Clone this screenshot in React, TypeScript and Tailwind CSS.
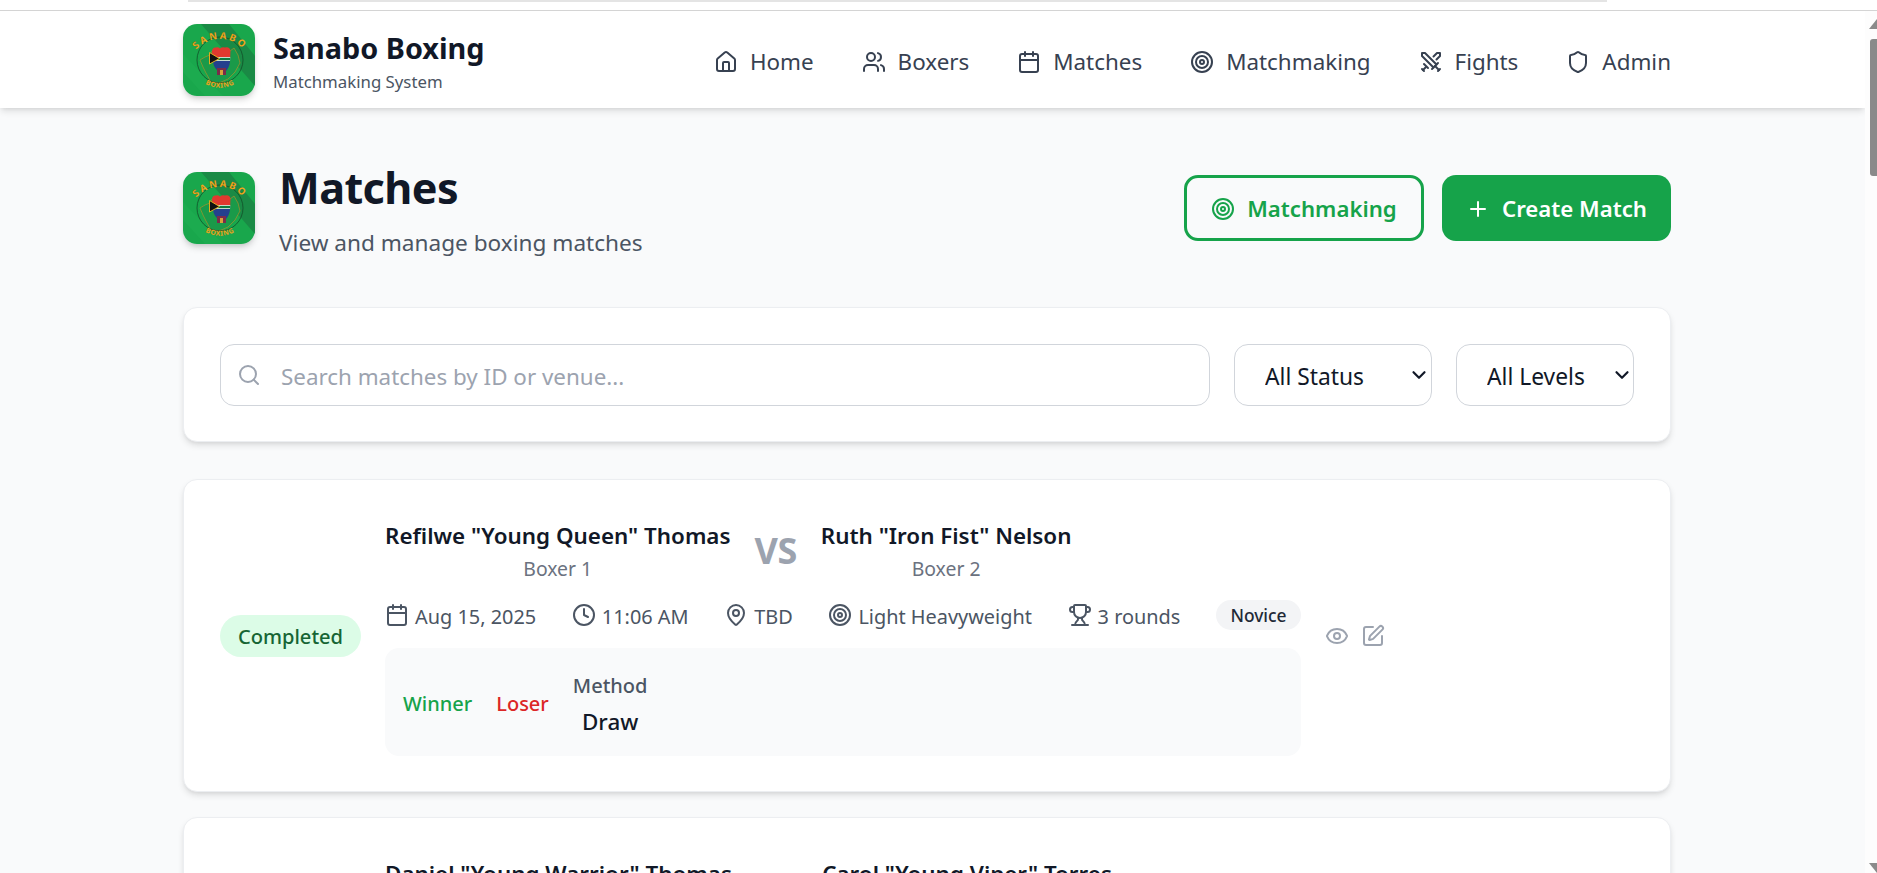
import React from "react";
import { House, Users, Calendar, Target, Swords, Shield, Plus, Search, Clock, MapPin, Trophy, Eye, SquarePen, ChevronDown } from "lucide-react";

function Logo({ id }: { id: string }) {
  return (
    <div className="w-[72px] h-[72px] shrink-0 rounded-[14px] overflow-hidden shadow-[0_4px_7px_-1px_rgba(0,0,0,0.18),0_2px_4px_-2px_rgba(0,0,0,0.1)]">
      <svg viewBox="0 0 72 72" width="72" height="72" className="block">
        <rect width="72" height="72" fill="#19a74c" />
        <polygon points="18,0 46,0 72,32 72,62" fill="#1a8a45" />
        <polygon points="0,48 0,30 40,72 22,72" fill="#1cab4f" />
        <path id={id + "top"} d="M9 31.5 A32 32 0 0 1 65 31.5" fill="none" />
        <path id={id + "bot"} d="M17 56 A30 30 0 0 0 57 56" fill="none" />
        <path d="M17 36 L22 33 L27 31 L29 27 L47 27 L51 24 L55 31 L57 39 L52 48 L45 55 L36 59 L28 58 L23 49 L20 43 Z" fill="#1a9a49" stroke="#a9902a" strokeWidth="0.7" />
        <circle cx="37" cy="36" r="23" fill="none" stroke="#134e2a" strokeWidth="0.8" />
        <clipPath id={id + "fist"}>
          <path d="M29 28 Q29 23 33 23.5 Q35 22.5 37 24.5 Q39 22.5 42 23.5 Q47 22.5 47.5 27 L47 38 Q46 44 43 47 L35 47 Q31 44 30 38 Z" />
        </clipPath>
        <g clipPath={`url(#${id}fist)`}>
          <rect x="26" y="21" width="24" height="13" fill="#e0392f" />
          <rect x="26" y="34" width="24" height="15" fill="#24408e" />
          <path d="M33 35 H50" stroke="#fff" strokeWidth="4" />
          <path d="M33 35 H50" stroke="#0f7a3e" strokeWidth="2.6" />
        </g>
        <polygon points="26.5,28.5 36.5,34.5 26.5,40" fill="#111" stroke="#f5b81c" strokeWidth="0.9" />
        <rect x="34" y="44" width="9" height="7" fill="#7a2c4a" />
        <rect x="37" y="46" width="3" height="5" fill="#d9a13a" />
        <text fontFamily="'Noto Sans',sans-serif" fontSize="9.6" fontWeight="700" fill="#f7a81b" letterSpacing="2.2" stroke="#5c4a12" strokeWidth="0.12">
          <textPath href={`#${id}top`} startOffset="50%" textAnchor="middle">SANABO</textPath>
        </text>
        <text fontFamily="'Noto Sans',sans-serif" fontSize="6.8" fontWeight="700" fill="#f7a81b" letterSpacing="0.5" stroke="#5c4a12" strokeWidth="0.08">
          <textPath href={`#${id}bot`} startOffset="50%" textAnchor="middle">BOXING</textPath>
        </text>
      </svg>
    </div>
  );
}

const nav = [
  { label: "Home", Icon: House },
  { label: "Boxers", Icon: Users },
  { label: "Matches", Icon: Calendar },
  { label: "Matchmaking", Icon: Target },
  { label: "Fights", Icon: Swords },
  { label: "Admin", Icon: Shield },
];

const meta = [
  { label: "Aug 15, 2025", Icon: Calendar },
  { label: "11:06 AM", Icon: Clock },
  { label: "TBD", Icon: MapPin },
  { label: "Light Heavyweight", Icon: Target },
  { label: "3 rounds", Icon: Trophy },
];

function Names({ a, b }: { a: string; b: string }) {
  return (
    <div className="flex items-center gap-[24px]">
      <div className="text-center">
        <div className="text-[22.4px] leading-[33px] font-semibold text-[#111827] whitespace-nowrap">{a}</div>
        <div className="text-[19.4px] leading-[26px] text-[#6b7280] mt-[4px]">Boxer 1</div>
      </div>
      <div className="text-[36px] leading-[40px] font-bold text-[#9ca3af] tracking-[-0.5px]">VS</div>
      <div className="text-center">
        <div className="text-[22.4px] leading-[33px] font-semibold text-[#111827] whitespace-nowrap">{b}</div>
        <div className="text-[19.4px] leading-[26px] text-[#6b7280] mt-[4px]">Boxer 2</div>
      </div>
    </div>
  );
}

const cardCls = "bg-white rounded-[14px] border border-[#eceef1] shadow-[0_4px_7px_-1px_rgba(0,0,0,0.12),0_2px_4px_-2px_rgba(0,0,0,0.08)]";

export default function App() {
  return (
    <div className="h-[873px] overflow-hidden flex flex-col bg-white font-['Noto_Sans',sans-serif]">
      <div className="h-[11px] shrink-0 border-b border-[#d4d4d4] bg-white">
        <div className="ml-[188px] w-[1419px] h-[2px] bg-[#e4e4e4]" />
      </div>
      <div className="flex-1 flex min-h-0">
        <div className="flex-1 min-w-0 bg-[#f9fafb] overflow-hidden">
          <header className="h-[97px] bg-white shadow-[0_4px_7px_-1px_rgba(0,0,0,0.12),0_2px_4px_-2px_rgba(0,0,0,0.08)] relative">
            <div className="ml-[183px] w-[1488px] h-full flex items-center justify-between">
              <div className="flex items-center gap-[18px]">
                <Logo id="h" />
                <div className="pt-[3px]">
                  <div className="text-[28.8px] leading-[38px] font-bold text-[#111827]">Sanabo Boxing</div>
                  <div className="text-[16.8px] leading-[24px] text-[#4b5563] mt-[3px]">Matchmaking System</div>
                </div>
              </div>
              <nav className="flex items-center gap-[48px] pt-[5px]">
                {nav.map(({ label, Icon }) => (
                  <a key={label} className="flex items-center gap-[12px] text-[#374151] text-[22.4px]">
                    <Icon size={24} strokeWidth={2} />
                    <span>{label}</span>
                  </a>
                ))}
              </nav>
            </div>
          </header>

          <main className="ml-[183px] w-[1488px]">
            <div className="mt-[64px] h-[72px] flex items-center justify-between">
              <div className="flex items-center gap-[24px]">
                <Logo id="p" />
                <div className="h-[72px]">
                  <h1 className="text-[43.2px] leading-[48px] font-bold text-[#111827] -mt-[8px] tracking-[-0.6px]">Matches</h1>
                  <p className="text-[22.6px] leading-[30px] text-[#4b5563] mt-[16px]">View and manage boxing matches</p>
                </div>
              </div>
              <div className="flex items-center gap-[18px]">
                <button className="h-[66px] w-[240px] pt-[2px] rounded-[14px] border-[3px] border-[#16a34a] text-[#16a34a] text-[22.2px] font-semibold flex items-center justify-center gap-[12px]">
                  <Target size={24} />
                  Matchmaking
                </button>
                <button className="h-[66px] w-[229px] pt-[2px] rounded-[14px] bg-[#16a34a] text-white text-[22.2px] font-semibold flex items-center justify-center gap-[12px]">
                  <Plus size={24} />
                  Create Match
                </button>
              </div>
            </div>

            <section className={`mt-[63px] h-[135px] px-[36px] flex items-center gap-[24px] ${cardCls}`}>
              <div className="relative flex-1">
                <Search size={24} className="absolute left-[17px] top-[19px] text-[#9ca3af]" />
                <input
                  placeholder="Search matches by ID or venue..."
                  className="w-full h-[62px] pl-[60px] pr-[16px] pt-[4px] rounded-[14px] border border-[#d1d5db] bg-white text-[22.4px] placeholder:text-[#9ca3af] outline-none"
                />
              </div>
              <div className="relative w-[198px] h-[62px] shrink-0">
                <select className="appearance-none w-full h-full pl-[30px] pt-[6px] rounded-[14px] border border-[#d1d5db] bg-white text-[22.8px] text-[#111827] outline-none">
                  <option>All Status</option>
                </select>
                <ChevronDown size={22} strokeWidth={2.4} className="absolute right-[2px] top-[20px] text-[#111827]" />
              </div>
              <div className="relative w-[178px] h-[62px] shrink-0">
                <select className="appearance-none w-full h-full pl-[30px] pt-[6px] rounded-[14px] border border-[#d1d5db] bg-white text-[22.8px] text-[#111827] outline-none">
                  <option>All Levels</option>
                </select>
                <ChevronDown size={22} strokeWidth={2.4} className="absolute right-[1px] top-[20px] text-[#111827]" />
              </div>
            </section>

            <article className={`mt-[37px] h-[313px] px-[36px] flex items-center gap-[24px] ${cardCls}`}>
              <span className="w-[141px] h-[42px] shrink-0 pt-[3px] rounded-full bg-[#dcfce7] text-[#166534] text-[20.1px] font-medium flex items-center justify-center">Completed</span>
              <div className="w-[916px] shrink-0 mt-[4px]">
                <Names a={'Refilwe "Young Queen" Thomas'} b={'Ruth "Iron Fist" Nelson'} />
                <div className="mt-[18px] h-[30px] flex items-center justify-between">
                  {meta.map(({ label, Icon }) => (
                    <span key={label} className="flex items-center gap-[6px] text-[#4b5563] text-[19.9px]">
                      <Icon size={24} />
                      <span className="pt-[3px]">{label}</span>
                    </span>
                  ))}
                  <span className="w-[85px] h-[30px] rounded-full bg-[#f3f4f6] text-[#1f2937] text-[17.4px] font-medium flex items-center justify-center">Novice</span>
                </div>
                <div className="mt-[18px] h-[108px] rounded-[14px] bg-[#f9fafb] px-[18px] flex items-center gap-[24px] text-[20px]">
                  <span className="text-[#16a34a] font-medium pt-[3px]">Winner</span>
                  <span className="text-[#dc2626] font-medium pt-[3px]">Loser</span>
                  <div className="text-center pt-[5px]">
                    <div className="text-[#4b5563] font-medium leading-[30px]">Method</div>
                    <div className="text-[#111827] text-[22.4px] font-medium leading-[34px] mt-[4px]">Draw</div>
                  </div>
                </div>
              </div>
              <div className="flex items-center gap-[12px] text-[#9ca3af]">
                <Eye size={24} />
                <SquarePen size={24} />
              </div>
            </article>

            <article className={`mt-[25px] h-[313px] pl-[201px] pt-[39px] ${cardCls}`}>
              <Names a={'Daniel "Young Warrior" Thomas'} b={'Carol "Young Viper" Torres'} />
            </article>
          </main>
        </div>

        <aside className="w-[12px] shrink-0 bg-[#fdfdfd] flex flex-col items-end relative">
          <div className="mt-[8px] h-0 w-0 border-l-[8px] border-b-[10px] border-l-transparent border-b-[#8a8a8a]" />
          <div className="mt-[10px] w-[7px] h-[137px] rounded-l-[3px] bg-[#8a8a8a]" />
          <div className="mt-auto h-0 w-0 border-l-[8px] border-t-[10px] border-l-transparent border-t-[#8a8a8a]" />
        </aside>
      </div>
    </div>
  );
}
